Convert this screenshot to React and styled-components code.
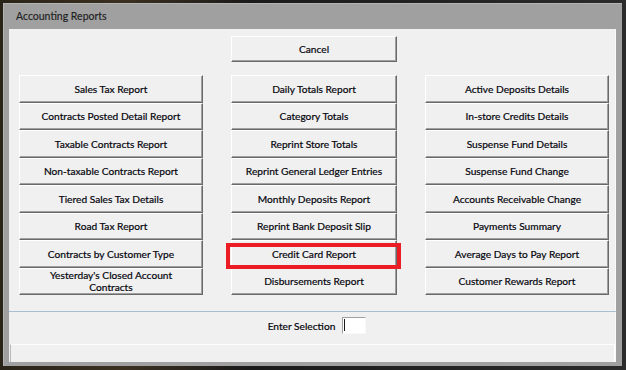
import React from "react";
import styled, { createGlobalStyle } from "styled-components";

const Global = createGlobalStyle`
  html, body { margin: 0; padding: 0; background: #1c1c1c; }
  #root { width: 626px; height: 370px; }
`;

const Screen = styled.div`
  width: 626px;
  height: 370px;
  box-sizing: border-box;
  padding: 3px 4px 4px 3px;
  display: flex;
  background:
    linear-gradient(90deg, #2a2418 0, #3b3020 20%, #1a1a1a 40%, #2b2b2b 100%);
`;

const Window = styled.div`
  flex: 1;
  display: flex;
  flex-direction: column;
  background: #a0a0a0;
  padding: 0 6px 4px 6px;
  box-shadow: inset 1px 1px 0 #b4b4b4;
`;

const TitleBar = styled.div`
  height: 26px;
  display: flex;
  align-items: center;
  padding-left: 7px;
  font-family: Lato, "Liberation Sans", sans-serif;
  font-size: 10.5px;
  color: #1e1e1e;
  -webkit-text-stroke: 0.15px #1e1e1e;
`;

const Client = styled.div`
  flex: 1;
  display: flex;
  flex-direction: column;
  background: #f0f0f0;
  padding: 7px 7px 0 10px;
  box-shadow: inset -1px 0 0 #fafafa;
`;

const Columns = styled.div`
  display: grid;
  grid-template-columns: 184px 166px 184px;
  column-gap: 28px;
`;

const CancelRow = styled(Columns)`
  grid-template-rows: 26px;
  margin-bottom: 13px;
`;

const ButtonGrid = styled(Columns)`
  grid-template-rows: repeat(8, 27.5px);
  grid-auto-flow: column;
`;

const Button = styled.button`
  box-sizing: border-box;
  width: 100%;
  height: 100%;
  margin: 0;
  padding: 0 4px;
  grid-column: ${(p) => p.$col || "auto"};
  background: #f0f0f0;
  border: 1px solid;
  border-color: #ffffff #696969 #696969 #ffffff;
  box-shadow: inset -1px -1px 0 #a0a0a0;
  font-family: Lato, "Liberation Sans", sans-serif;
  font-size: 10.2px;
  line-height: 12.5px;
  color: #05050d;
  -webkit-text-stroke: 0.2px #05050d;
  text-align: center;
  cursor: default;
`;

const HighlightCell = styled.div`
  position: relative;
  display: flex;
`;

const Highlight = styled.div`
  position: absolute;
  left: -5px;
  right: -4px;
  top: 2.5px;
  bottom: -1px;
  border: 4px solid #ec1c24;
  pointer-events: none;
`;

const Separator = styled.div`
  margin-top: 16px;
  margin-left: -10px;
  margin-right: -7px;
  border-top: 1px solid #a9bdd3;
`;

const SelectionRow = styled.div`
  margin-top: 5px;
  height: 17px;
  display: flex;
  align-items: center;
  justify-content: center;
  gap: 7px;
  padding-left: 6px;
`;

const Label = styled.span`
  font-family: Lato, "Liberation Sans", sans-serif;
  font-size: 10.2px;
  color: #05050d;
  -webkit-text-stroke: 0.2px #05050d;
`;

const InputBox = styled.div`
  position: relative;
  box-sizing: border-box;
  width: 24px;
  height: 17px;
  background: #ffffff;
  border: 1px solid;
  border-color: #a0a0a0 #f8f8f8 #f8f8f8 #a0a0a0;
  &::after {
    content: "";
    position: absolute;
    left: 1px;
    top: 1px;
    bottom: 2px;
    width: 1px;
    background: #1a1a1a;
  }
`;

const StatusBar = styled.div`
  margin-top: auto;
  margin-left: -9px;
  margin-right: -6px;
  height: 18px;
  box-sizing: border-box;
  border-top: 1px solid #fdfdfd;
  border-left: 1px solid #b8b8b8;
  border-right: 1px solid #ffffff;
  background: #f0f0f0;
`;

const col1 = [
  "Sales Tax Report",
  "Contracts Posted Detail Report",
  "Taxable Contracts Report",
  "Non-taxable Contracts Report",
  "Tiered Sales Tax Details",
  "Road Tax Report",
  "Contracts by Customer Type",
  ["Yesterday's Closed Account", "Contracts"],
];

const col2 = [
  "Daily Totals Report",
  "Category Totals",
  "Reprint Store Totals",
  "Reprint General Ledger Entries",
  "Monthly Deposits Report",
  "Reprint Bank Deposit Slip",
  "Credit Card Report",
  "Disbursements Report",
];

const col3 = [
  "Active Deposits Details",
  "In-store Credits Details",
  "Suspense Fund Details",
  "Suspense Fund Change",
  "Accounts Receivable Change",
  "Payments Summary",
  "Average Days to Pay Report",
  "Customer Rewards Report",
];

const renderLabel = (label) =>
  Array.isArray(label) ? (
    <>
      {label[0]}
      <br />
      {label[1]}
    </>
  ) : (
    label
  );

export default function App() {
  const all = [...col1, ...col2, ...col3];
  return (
    <>
      <Global />
      <Screen>
        <Window>
          <TitleBar>Accounting Reports</TitleBar>
          <Client>
            <CancelRow>
              <Button $col="2">Cancel</Button>
            </CancelRow>
            <ButtonGrid>
              {all.map((label) => {
                const key = Array.isArray(label) ? label.join(" ") : label;
                if (label === "Credit Card Report") {
                  return (
                    <HighlightCell key={key}>
                      <Button>{label}</Button>
                      <Highlight />
                    </HighlightCell>
                  );
                }
                return <Button key={key}>{renderLabel(label)}</Button>;
              })}
            </ButtonGrid>
            <Separator />
            <SelectionRow>
              <Label>Enter Selection</Label>
              <InputBox />
            </SelectionRow>
            <StatusBar />
          </Client>
        </Window>
      </Screen>
    </>
  );
}
